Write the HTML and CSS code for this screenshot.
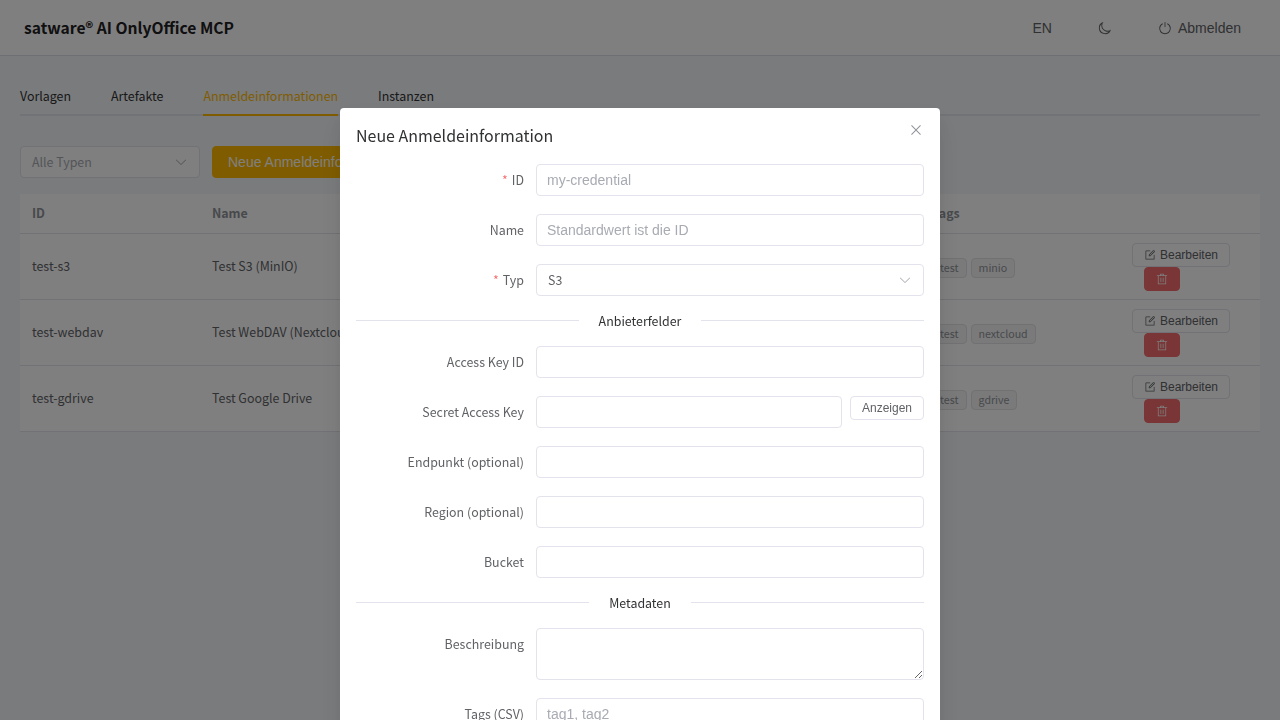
FILE: index.html
```html
<!DOCTYPE html>
<html lang="de">
<head>
  <meta charset="UTF-8">
  <meta name="viewport" content="width=device-width, initial-scale=1.0">
  <title>satware® AI OnlyOffice MCP</title>
  <link rel="stylesheet" href="styles.css">
</head>
<body>

  <!-- Icons -->
  <svg class="sprite" width="0" height="0">
    <symbol id="icon-arrow" viewBox="0 0 1024 1024"><path d="M831.872 340.864 512 652.672 192.128 340.864a30.592 30.592 0 0 0-42.752 0 29.12 29.12 0 0 0 0 41.6L489.664 714.24a32 32 0 0 0 44.672 0l340.288-331.712a29.12 29.12 0 0 0 0-41.728 30.592 30.592 0 0 0-42.752 0z"/></symbol>
    <symbol id="icon-close" viewBox="0 0 1024 1024"><path d="M764.288 214.592 512 466.88 259.712 214.592a31.936 31.936 0 0 0-45.12 45.12L466.752 512 214.528 764.224a31.936 31.936 0 1 0 45.12 45.184L512 557.184l252.288 252.288a31.936 31.936 0 0 0 45.12-45.12L557.12 512.064l252.288-252.352a31.936 31.936 0 1 0-45.12-45.184z"/></symbol>
    <symbol id="icon-edit" viewBox="0 0 1024 1024"><path d="M832 512a32 32 0 1 1 64 0v352a32 32 0 0 1-32 32H160a32 32 0 0 1-32-32V160a32 32 0 0 1 32-32h352a32 32 0 0 1 0 64H192v640h640z"/><path d="m469.952 554.24 52.8-7.552L847.104 222.4a32 32 0 1 0-45.248-45.248L477.44 501.44l-7.552 52.8zm422.4-422.4a96 96 0 0 1 0 135.808l-331.84 331.84a32 32 0 0 1-18.112 9.088L436.8 623.68a32 32 0 0 1-36.224-36.224l15.104-105.6a32 32 0 0 1 9.024-18.112l331.904-331.84a96 96 0 0 1 135.744 0z"/></symbol>
    <symbol id="icon-delete" viewBox="0 0 1024 1024"><path d="M160 256H96a32 32 0 0 1 0-64h256V95.936a32 32 0 0 1 32-32h256a32 32 0 0 1 32 32V192h256a32 32 0 1 1 0 64h-64v672a32 32 0 0 1-32 32H192a32 32 0 0 1-32-32zm448-64v-64H416v64zM224 896h576V256H224zm192-128a32 32 0 0 1-32-32V416a32 32 0 0 1 64 0v320a32 32 0 0 1-32 32m192 0a32 32 0 0 1-32-32V416a32 32 0 0 1 64 0v320a32 32 0 0 1-32 32"/></symbol>
    <symbol id="icon-moon" viewBox="0 0 1024 1024"><path d="M240.448 240.448a384 384 0 1 0 559.424 525.696 448 448 0 0 1-542.016-542.08 390.592 390.592 0 0 0-17.408 16.384zm181.056 362.048a384 384 0 0 0 525.632 16.384A448 448 0 1 1 405.056 76.8a384 384 0 0 0 16.448 525.696"/></symbol>
    <symbol id="icon-power" viewBox="0 0 1024 1024"><path d="M352 159.872V230.4a352 352 0 1 0 320 0v-70.528A416.128 416.128 0 0 1 512 960a416 416 0 0 1-160-800.128z"/><path d="M512 64q32 0 32 32v320q0 32-32 32t-32-32V96q0-32 32-32"/></symbol>
  </svg>

  <header class="header">
    <h1>satware® AI OnlyOffice MCP</h1>
    <div class="header-actions">
      <button class="btn btn-text">EN</button>
      <button class="btn btn-text"><svg class="icon"><use href="#icon-moon"/></svg></button>
      <button class="btn btn-text"><svg class="icon"><use href="#icon-power"/></svg><span>Abmelden</span></button>
    </div>
  </header>

  <main class="main">
    <nav class="tabs">
      <a class="tab">Vorlagen</a>
      <a class="tab">Artefakte</a>
      <a class="tab active">Anmeldeinformationen</a>
      <a class="tab">Instanzen</a>
    </nav>

    <div class="toolbar">
      <div class="select filter"><span>Alle Typen</span><svg class="icon"><use href="#icon-arrow"/></svg></div>
      <button class="btn btn-primary">Neue Anmeldeinformation</button>
    </div>

    <table class="table">
      <colgroup>
        <col class="col-id"><col class="col-name"><col><col class="col-tags"><col class="col-actions">
      </colgroup>
      <thead>
        <tr><th>ID</th><th>Name</th><th></th><th>Tags</th><th></th></tr>
      </thead>
      <tbody>
        <tr>
          <td>test-s3</td>
          <td>Test S3 (MinIO)</td>
          <td></td>
          <td><div class="tags"><span class="tag">test</span><span class="tag">minio</span></div></td>
          <td class="actions">
            <button class="btn btn-small"><svg class="icon"><use href="#icon-edit"/></svg><span>Bearbeiten</span></button>
            <button class="btn btn-small btn-danger"><svg class="icon"><use href="#icon-delete"/></svg></button>
          </td>
        </tr>
        <tr>
          <td>test-webdav</td>
          <td>Test WebDAV (Nextcloud)</td>
          <td></td>
          <td><div class="tags"><span class="tag">test</span><span class="tag">nextcloud</span></div></td>
          <td class="actions">
            <button class="btn btn-small"><svg class="icon"><use href="#icon-edit"/></svg><span>Bearbeiten</span></button>
            <button class="btn btn-small btn-danger"><svg class="icon"><use href="#icon-delete"/></svg></button>
          </td>
        </tr>
        <tr>
          <td>test-gdrive</td>
          <td>Test Google Drive</td>
          <td></td>
          <td><div class="tags"><span class="tag">test</span><span class="tag">gdrive</span></div></td>
          <td class="actions">
            <button class="btn btn-small"><svg class="icon"><use href="#icon-edit"/></svg><span>Bearbeiten</span></button>
            <button class="btn btn-small btn-danger"><svg class="icon"><use href="#icon-delete"/></svg></button>
          </td>
        </tr>
      </tbody>
    </table>
  </main>

  <!-- Dialog -->
  <div class="overlay">
    <div class="dialog">
      <div class="dialog-header">
        <h2>Neue Anmeldeinformation</h2>
        <button class="dialog-close"><svg class="icon"><use href="#icon-close"/></svg></button>
      </div>
      <form>
        <div class="form-item">
          <label class="required" for="cred-id">ID</label>
          <input type="text" id="cred-id" placeholder="my-credential">
        </div>
        <div class="form-item">
          <label for="cred-name">Name</label>
          <input type="text" id="cred-name" placeholder="Standardwert ist die ID">
        </div>
        <div class="form-item">
          <label class="required">Typ</label>
          <div class="select"><span>S3</span><svg class="icon"><use href="#icon-arrow"/></svg></div>
        </div>

        <div class="divider"><span>Anbieterfelder</span></div>

        <div class="form-item">
          <label for="access-key">Access Key ID</label>
          <input type="text" id="access-key">
        </div>
        <div class="form-item">
          <label for="secret-key">Secret Access Key</label>
          <input type="password" id="secret-key">
          <button type="button" class="btn btn-small btn-show">Anzeigen</button>
        </div>
        <div class="form-item">
          <label for="endpoint">Endpunkt (optional)</label>
          <input type="text" id="endpoint">
        </div>
        <div class="form-item">
          <label for="region">Region (optional)</label>
          <input type="text" id="region">
        </div>
        <div class="form-item">
          <label for="bucket">Bucket</label>
          <input type="text" id="bucket">
        </div>

        <div class="divider"><span>Metadaten</span></div>

        <div class="form-item">
          <label for="description">Beschreibung</label>
          <textarea id="description"></textarea>
        </div>
        <div class="form-item">
          <label for="tags">Tags (CSV)</label>
          <input type="text" id="tags" placeholder="tag1, tag2">
        </div>
      </form>
    </div>
  </div>

</body>
</html>
```
FILE: styles.css
```css
* {
  box-sizing: border-box;
}

body {
  margin: 0;
  height: 100vh;
  overflow: hidden;
  font-family: "Noto Sans CJK SC", sans-serif;
  font-size: 12.42px;
  color: #303133;
  background: #f5f7fa;
}

.sprite {
  position: absolute;
}

.icon {
  width: 1em;
  height: 1em;
  fill: currentColor;
  flex-shrink: 0;
}

/* header */
.header {
  display: flex;
  justify-content: space-between;
  align-items: center;
  height: 56px;
  padding: 0 23px 0 24px;
  background: #fff;
  border-bottom: 1px solid #dcdfe6;
}

.header h1 {
  margin: 0;
  font-size: 15.64px;
  line-height: 24px;
  font-weight: 700;
  color: #1f2023;
}

.header-actions {
  display: flex;
  gap: 14px;
}

/* buttons */
.btn {
  display: inline-flex;
  align-items: center;
  justify-content: center;
  gap: 6px;
  height: 32px;
  padding: 8px 15px;
  border: 1px solid #e2e3ec;
  border-radius: 4px;
  background: #fff;
  color: #606266;
  font-family: "Liberation Sans", Arial, sans-serif;
  font-size: 14px;
  line-height: 1;
  white-space: nowrap;
  cursor: pointer;
}

.btn-text {
  border-color: transparent;
  background: transparent;
}

.btn-primary {
  border-color: #ffb900;
  background: #ffb900;
  color: #fff;
}

.btn-small {
  gap: 4px;
  height: 24px;
  padding: 5px 11px;
  font-size: 12px;
}

.btn-danger {
  border-color: #f56c6c;
  background: #f56c6c;
  color: #fff;
}

.main {
  padding: 20px;
}

/* tabs */
.tabs {
  display: flex;
  gap: 40px;
  height: 40px;
  margin-bottom: 30px;
  box-shadow: inset 0 -2px #e4e7ed;
}

.tab {
  height: 40px;
  line-height: 40px;
}

.tab.active {
  color: #ffb900;
  border-bottom: 2px solid #ffb900;
}

.toolbar {
  display: flex;
  gap: 12px;
  margin-bottom: 16px;
}

.select {
  display: flex;
  align-items: center;
  justify-content: space-between;
  flex: 1;
  height: 32px;
  padding: 0 11px;
  border: 1px solid #e2e3ec;
  border-radius: 4px;
  background: #fff;
  color: #606266;
}

.select .icon {
  color: #a8abb2;
  font-size: 14px;
}

.filter {
  flex: none;
  width: 180px;
  color: #a8abb2;
}

/* table */
.table {
  width: 100%;
  table-layout: fixed;
  border-collapse: separate;
  border-spacing: 0;
  background: #fff;
  color: #606266;
}

.col-id,
.col-name {
  width: 180px;
}

.col-tags {
  width: 200px;
}

.col-actions {
  width: 140px;
}

.table th,
.table td {
  padding: 0 12px;
  border-bottom: 1px solid #e2e3ec;
  text-align: left;
  white-space: nowrap;
  line-height: 23px;
}

.table th {
  height: 40px;
  color: #909399;
  font-weight: 700;
}

.table td {
  height: 66px;
}

.table .actions {
  padding: 9px 12px 8px;
}

.actions .btn {
  display: flex;
}

.actions .btn-danger {
  margin-left: 12px;
}

.tags {
  display: flex;
  gap: 4px;
  padding-top: 3px;
}

.tag {
  height: 20px;
  padding: 0 7px;
  border: 1px solid #e2e3e8;
  border-radius: 4px;
  background: #f4f4f5;
  color: #909399;
  font-size: 10.67px;
  line-height: 18px;
}

/* dialog sits over the page */
.overlay {
  position: fixed;
  inset: 0;
  overflow: hidden;
  background: rgba(0, 0, 0, 0.5);
}

.dialog {
  width: 600px;
  margin: 15vh auto 50px;
  padding: 16px;
  border-radius: 4px;
  background: #fff;
  box-shadow: 0 12px 32px 4px rgba(0, 0, 0, 0.04), 0 8px 20px rgba(0, 0, 0, 0.08);
}

.dialog-header {
  display: flex;
  justify-content: space-between;
  padding-bottom: 16px;
}

.dialog-header h2 {
  margin: 0;
  font-size: 15.98px;
  line-height: 22px;
  font-weight: 400;
}

.dialog-close {
  display: flex;
  align-items: center;
  justify-content: center;
  width: 48px;
  height: 48px;
  margin: -18px -16px -6px 0;
  padding: 0;
  border: none;
  background: none;
  color: #909399;
  font-size: 16px;
}

.form-item {
  display: flex;
  align-items: flex-start;
  margin-bottom: 18px;
}

.form-item label {
  width: 180px;
  height: 32px;
  padding-right: 12px;
  line-height: 32px;
  text-align: right;
  color: #606266;
}

.required::before {
  content: "*";
  margin-right: 4px;
  color: #f56c6c;
}

input,
textarea {
  flex: 1;
  min-width: 0;
  height: 32px;
  padding: 0 10px;
  border: 1px solid #e2e3ec;
  border-radius: 4px;
  background: #fff;
  color: #606266;
  font-family: "Liberation Sans", Arial, sans-serif;
  font-size: 14px;
}

textarea {
  height: 52px;
  padding: 5px 11px;
  resize: vertical;
}

input::placeholder {
  color: #a8abb2;
}

.btn-show {
  margin-left: 8px;
}

.divider {
  display: flex;
  align-items: center;
  gap: 20px;
  height: 2px;
  margin: 24px 0;
}

.divider::before,
.divider::after {
  content: "";
  flex: 1;
  height: 1px;
  margin-bottom: 1px;
  background: #e2e3ec;
}
```
